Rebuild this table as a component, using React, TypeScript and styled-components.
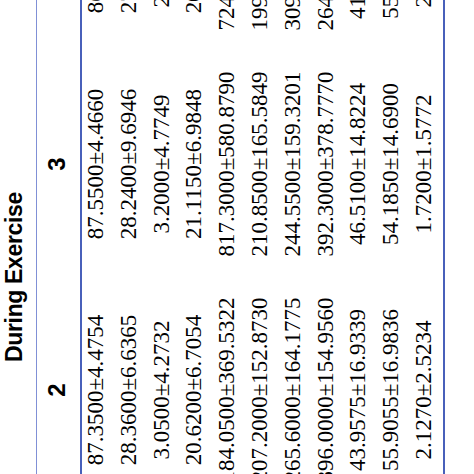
import styled, { createGlobalStyle } from "styled-components";

const GlobalStyle = createGlobalStyle`
    html, body {
        margin: 0;
        padding: 0;
        background: #ffffff;
    }
`;

const COL = 226;
const RULE = "rgb(72, 96, 186)";

const Viewport = styled.div`
    width: 474px;
    height: 474px;
    overflow: hidden;
    background: #ffffff;
`;

// the table is laid out upright, then turned a quarter to the left like the scanned page
const Sheet = styled.div`
    width: ${COL * 3}px;
    transform-origin: 0 0;
    transform: translate(0, 474px) rotate(-90deg) translateX(-29px);
    color: #000000;
`;

const GroupRow = styled.div`
    display: grid;
    grid-template-columns: repeat(3, ${COL}px);
    height: 37px;
    box-sizing: border-box;
    border-bottom: 1px solid rgb(128, 144, 214);
`;

const GroupTitle = styled.div<{ $span: number }>`
    grid-column: span ${(p) => p.$span};
    text-align: center;
    font-family: "Liberation Sans", Arial, sans-serif;
    font-weight: 700;
    font-size: 23px;
    letter-spacing: -0.35px;
    line-height: 28px;
    white-space: nowrap;
`;

const HeadRow = styled.div`
    display: grid;
    grid-template-columns: repeat(3, ${COL}px);
    height: 45px;
    box-sizing: border-box;
    border-bottom: 2px solid ${RULE};
`;

const ColumnHead = styled.div`
    text-align: center;
    font-family: "Liberation Sans", Arial, sans-serif;
    font-weight: 700;
    font-size: 24px;
    line-height: 40px;
`;

const Body = styled.div`
    display: grid;
    grid-auto-rows: 32.8px;
    border-bottom: 2px solid ${RULE};
`;

const Row = styled.div`
    display: grid;
    grid-template-columns: repeat(3, ${COL}px);
`;

const Cell = styled.div`
    text-align: center;
    font-family: "Liberation Serif", "Times New Roman", serif;
    font-size: 23px;
    line-height: 27px;
    white-space: nowrap;
`;

const rows: string[][] = [
    ["87.3500±4.4754", "87.5500±4.4660", "86.9500±4.5826"],
    ["28.3600±6.6365", "28.2400±9.6946", "27.9800±6.1352"],
    ["3.0500±4.2732", "3.2000±4.7749", "2.8500±3.9127"],
    ["20.6200±6.7054", "21.1150±6.9848", "20.7350±7.0412"],
    ["184.0500±369.5322", "817.3000±580.8790", "724.6500±512.3318"],
    ["207.2000±152.8730", "210.8500±165.5849", "199.4500±148.2271"],
    ["265.6000±164.1775", "244.5500±159.3201", "309.1500±172.6634"],
    ["396.0000±154.9560", "392.3000±378.7770", "264.8000±301.5528"],
    ["43.9575±16.9339", "46.5100±14.8224", "41.8350±15.2207"],
    ["55.9055±16.9836", "54.1850±14.6900", "55.0240±15.8811"],
    ["2.1270±2.5234", "1.7200±1.5772", "2.0430±1.9916"],
];

export default function App() {
    return (
        <>
            <GlobalStyle />
            <Viewport>
                <Sheet>
                    <GroupRow>
                        <GroupTitle $span={2}>During Exercise</GroupTitle>
                        <GroupTitle $span={1}></GroupTitle>
                    </GroupRow>
                    <HeadRow>
                        <ColumnHead>2</ColumnHead>
                        <ColumnHead>3</ColumnHead>
                        <ColumnHead>4</ColumnHead>
                    </HeadRow>
                    <Body>
                        {rows.map((row, i) => (
                            <Row key={i}>
                                {row.map((value, j) => (
                                    <Cell key={j}>{value}</Cell>
                                ))}
                            </Row>
                        ))}
                    </Body>
                </Sheet>
            </Viewport>
        </>
    );
}
